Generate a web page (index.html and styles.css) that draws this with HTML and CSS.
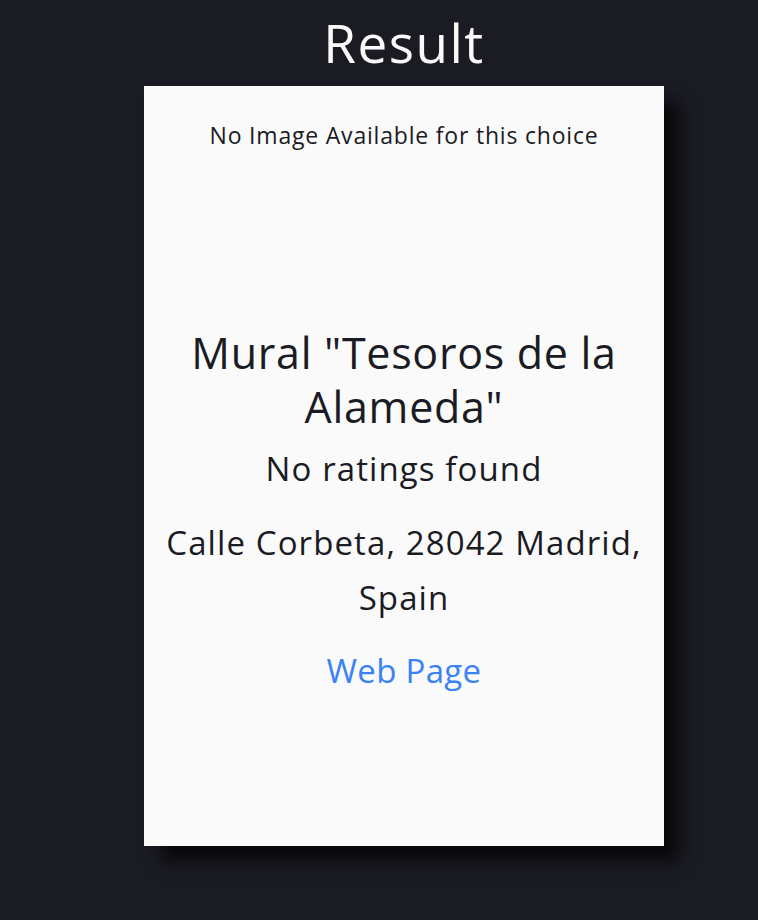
FILE: index.html
```html
<!DOCTYPE html>
<html>
<head>
<meta charset="utf-8">
<link rel="stylesheet" href="styles.css">
</head>
<body>
<main class="page">
  <h1 class="heading">Result</h1>
  <section class="card">
    <div class="image-box">
      <p class="no-image">No Image Available for this choice</p>
    </div>
    <div class="info">
      <h2 class="place-name">Mural "Tesoros de la Alameda"</h2>
      <p class="rating">No ratings found</p>
      <p class="address">Calle Corbeta, 28042 Madrid, Spain</p>
      <a class="web-link" href="#">Web Page</a>
    </div>
  </section>
</main>
</body>
</html>
```
FILE: styles.css
```css
html, body {
  margin: 0;
  padding: 0;
  background: #1b1b24;
}
body {
  font-family: "Open Sans", "Noto Sans", sans-serif;
  color: #1b1b24;
  min-height: 920px;
}
.page {
  width: 520px;
  margin: 0 0 0 144px;
  display: flex;
  flex-direction: column;
  align-items: center;
}
.heading {
  margin: 12px 0 0;
  height: 74px;
  line-height: 62px;
  font-size: 53px;
  font-weight: 500;
  letter-spacing: 1.5px;
  color: #fafafa;
}
.card {
  width: 520px;
  height: 760px;
  background: #fafafa;
  box-shadow: 16px 16px 16px rgba(0, 0, 0, 0.68);
  display: flex;
  flex-direction: column;
  align-items: center;
  text-align: center;
}
.image-box {
  height: 240px;
  width: 100%;
}
.no-image {
  margin: 34px 0 0;
  font-size: 23px;
  letter-spacing: 0.8px;
  line-height: 30px;
}
.info {
  display: flex;
  flex-direction: column;
  align-items: center;
  padding: 0 12px;
}
.place-name {
  margin: 0;
  font-size: 43px;
  font-weight: 500;
  letter-spacing: 0.7px;
  line-height: 54px;
}
.rating {
  margin: 13px 0 0;
  font-size: 33px;
  letter-spacing: 1.1px;
  line-height: 44px;
}
.address {
  margin: 24px 0 0;
  font-size: 33px;
  letter-spacing: 1.1px;
  line-height: 55px;
}
.web-link {
  margin-top: 24px;
  font-size: 33px;
  letter-spacing: 0.3px;
  line-height: 44px;
  color: #3b82f6;
  text-decoration: none;
}
```
